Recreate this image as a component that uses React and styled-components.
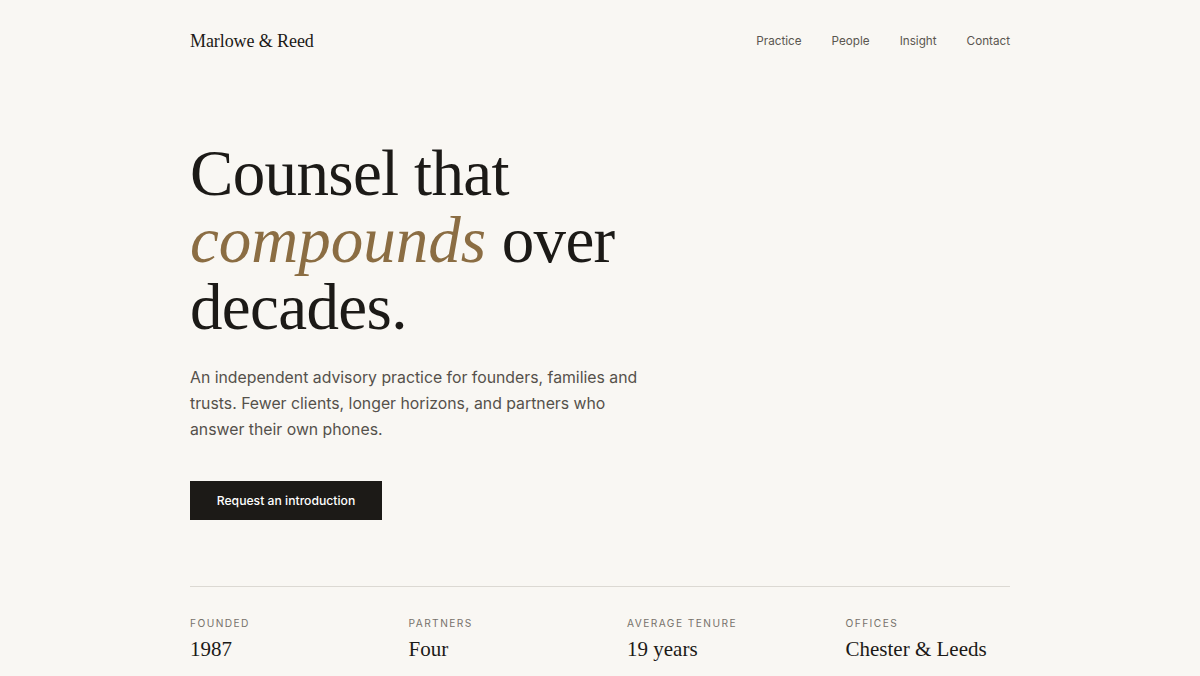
import React from 'react';
import styled, { createGlobalStyle } from 'styled-components';

const GlobalStyle = createGlobalStyle`
  html, body {
    margin: 0;
    padding: 0;
    background: #f9f7f3;
  }
  body {
    font-family: Inter, "Noto Sans", sans-serif;
    color: #1c1a17;
    -webkit-font-smoothing: antialiased;
  }
`;

const serif = `"Liberation Serif", "DejaVu Serif", serif`;

const Page = styled.div`
  max-width: 820px;
  margin: 0 auto;
  padding: 0 190px;
`;

const Header = styled.header`
  display: flex;
  justify-content: space-between;
  align-items: center;
  height: 82px;
`;

const Brand = styled.div`
  font-family: ${serif};
  font-size: 18px;
  letter-spacing: -0.005em;
  color: #1c1a17;
`;

const Nav = styled.nav`
  display: flex;
  gap: 30px;

  a {
    font-size: 11.7px;
    color: #5a5650;
    text-decoration: none;
  }
`;

const Hero = styled.section`
  padding-top: 58px;
`;

const Headline = styled.h1`
  margin: 0;
  font-family: ${serif};
  font-weight: 400;
  font-size: 65px;
  line-height: 67px;
  letter-spacing: -0.01em;
  color: #1c1a17;

  em {
    color: #8b6d43;
    font-style: italic;
    letter-spacing: 0;
  }
`;

const Lead = styled.p`
  margin: 24px 0 0;
  max-width: 460px;
  font-size: 15.8px;
  line-height: 26px;
  color: #55514b;
`;

const Button = styled.a`
  display: inline-flex;
  align-items: center;
  justify-content: center;
  margin-top: 38px;
  width: 192px;
  height: 39px;
  background: #1c1a17;
  color: #fff;
  font-size: 12.2px;
  font-weight: 500;
  text-decoration: none;
`;

const Stats = styled.div`
  margin-top: 66px;
  border-top: 1px solid #dcd9d3;
  padding-top: 30px;
  display: grid;
  grid-template-columns: repeat(4, 1fr);
  gap: 54px;
`;

const Stat = styled.div`
  display: flex;
  flex-direction: column;
  gap: 8px;
`;

const Label = styled.div`
  font-size: 10.2px;
  letter-spacing: 0.14em;
  text-transform: uppercase;
  color: #77726b;
`;

const Value = styled.div`
  font-family: ${serif};
  font-size: 21px;
  color: #1c1a17;
`;

const stats = [
  { label: 'Founded', value: '1987' },
  { label: 'Partners', value: 'Four' },
  { label: 'Average tenure', value: '19 years' },
  { label: 'Offices', value: 'Chester & Leeds' },
];

export default function App() {
  return (
    <>
      <GlobalStyle />
      <Page>
        <Header>
          <Brand>Marlowe &amp; Reed</Brand>
          <Nav>
            <a href="#">Practice</a>
            <a href="#">People</a>
            <a href="#">Insight</a>
            <a href="#">Contact</a>
          </Nav>
        </Header>
        <Hero>
          <Headline>
            Counsel that<br />
            <em>compounds</em> over<br />
            decades.
          </Headline>
          <Lead>
            An independent advisory practice for founders, families and trusts. Fewer clients,
            longer horizons, and partners who answer their own phones.
          </Lead>
          <Button href="#">Request an introduction</Button>
        </Hero>
        <Stats>
          {stats.map(s => (
            <Stat key={s.label}>
              <Label>{s.label}</Label>
              <Value>{s.value}</Value>
            </Stat>
          ))}
        </Stats>
      </Page>
    </>
  );
}
